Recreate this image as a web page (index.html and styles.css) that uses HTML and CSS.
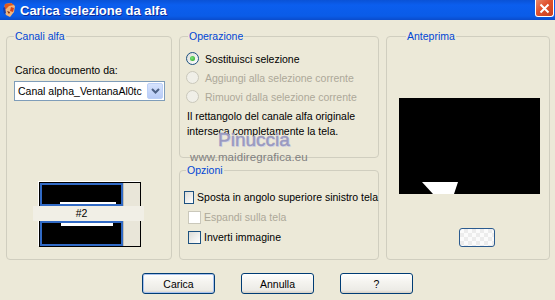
FILE: index.html
```html
<!DOCTYPE html>
<html lang="it">
<head>
    <meta charset="UTF-8">
    <title>Carica selezione da alfa</title>
    <link rel="stylesheet" href="styles.css">
</head>
<body>
    <div class="window">
        <div class="titlebar">
            <svg class="app-icon" width="15" height="16" viewBox="0 0 15 16">
                <path d="M3 2 L9 1 L13 4 L12 10 L8 15 L4 13 L2 8 Z" fill="#f2b57c"/>
                <path d="M3 2 L9 1 L12 3 L7 4 L4 7 L2 8 Z" fill="#e2581c"/>
                <path d="M9 5 L12 6 L11 10 L8 9 Z" fill="#d9431a"/>
                <path d="M1 6 L3 5 L4 11 L2 12 Z" fill="#1d3ea8"/>
                <path d="M5 9 L8 10 L7 12 Z" fill="#7a2a10"/>
            </svg>
            <span class="title">Carica selezione da alfa</span>
            <span class="close">
                <svg width="11" height="11" viewBox="0 0 11 11"><path d="M1.5 1.5 L9.5 9.5 M9.5 1.5 L1.5 9.5" stroke="#fff" stroke-width="2"/></svg>
            </span>
        </div>

        <div class="content">
            <div class="columns">
                <fieldset class="group group-alpha">
                    <legend>Canali alfa</legend>
                    <div class="field-label">Carica documento da:</div>
                    <div class="combo">
                        <span class="combo-text">Canal alpha_VentanaAl0tc</span>
                        <span class="combo-btn">
                            <svg width="9" height="6" viewBox="0 0 9 6"><path d="M1 1 L4.5 4.5 L8 1" fill="none" stroke="#4d6185" stroke-width="2"/></svg>
                        </span>
                    </div>
                    <div class="thumbs">
                        <div class="thumb thumb-top"></div>
                        <div class="thumb-side"></div>
                        <div class="thumb-label">#2</div>
                        <div class="thumb thumb-bottom"></div>
                        <div class="thumb-side"></div>
                    </div>
                </fieldset>

                <div class="col-mid">
                    <fieldset class="group group-op">
                        <legend>Operazione</legend>
                        <div class="option"><span class="radio checked"></span>Sostituisci selezione</div>
                        <div class="option disabled"><span class="radio"></span>Aggiungi alla selezione corrente</div>
                        <div class="option disabled"><span class="radio"></span>Rimuovi dalla selezione corrente</div>
                        <p class="note">Il rettangolo del canale alfa originale<br>interseca completamente la tela.</p>
                    </fieldset>
                    <fieldset class="group group-opt">
                        <legend>Opzioni</legend>
                        <div class="option"><span class="check"></span>Sposta in angolo superiore sinistro tela</div>
                        <div class="option sub disabled"><span class="check"></span>Espandi sulla tela</div>
                        <div class="option sub"><span class="check"></span>Inverti immagine</div>
                    </fieldset>
                </div>

                <fieldset class="group group-preview">
                    <legend>Anteprima</legend>
                    <div class="preview">
                        <svg width="141" height="96" viewBox="0 0 141 96">
                            <polygon points="23,84 59,84 55,96 34,96" fill="#fff"/>
                        </svg>
                    </div>
                    <button class="mini-btn"></button>
                </fieldset>
            </div>

            <div class="buttons">
                <button class="btn default">Carica</button>
                <button class="btn">Annulla</button>
                <button class="btn">?</button>
            </div>
        </div>

        <div class="watermark">
            <span class="wm-name">Pinuccia</span>
            <span class="wm-site">www.maidiregrafica.eu</span>
        </div>
    </div>
</body>
</html>
```

FILE: styles.css
```css
body {
    margin: 0;
    background: #ece9d8;
    font-family: "Liberation Sans", Arial, sans-serif;
    font-size: 10.5px;
    color: #000;
    overflow: hidden;
}
.window {
    position: relative;
    width: 555px;
    height: 300px;
    background: #ece9d8;
}
.titlebar {
    display: flex;
    align-items: center;
    height: 20px;
    background: linear-gradient(#0a52d6 0%, #0b5eee 25%, #0a5ce8 80%, #0a4ccc 100%);
}
.app-icon {
    margin-left: 2px;
}
.title {
    margin-left: 3px;
    color: #fff;
    font-weight: bold;
    font-size: 13px;
    text-shadow: 1px 1px 0 #0a2a9a;
}
.close {
    display: flex;
    align-items: center;
    justify-content: center;
    align-self: flex-start;
    margin-left: auto;
    margin-right: 1px;
    width: 17px;
    height: 16px;
    border: 1px solid #fff;
    border-top: none;
    border-radius: 0 0 3px 3px;
    background: linear-gradient(135deg, #e9886a, #e0502c 45%, #c8401f);
}

.content {
    padding: 10px 0 0 6px;
}
.columns {
    display: grid;
    grid-template-columns: 166px 200px 164px;
    column-gap: 7px;
    height: 230px;
}
.group {
    margin: 0;
    padding: 0;
    border: 1px solid #d0cebf;
    border-radius: 4px;
    min-width: 0;
}
.group legend {
    margin-left: 7px;
    padding: 0 1px;
    line-height: 13px;
    color: #0046d5;
}

.field-label {
    margin: 21px 0 0 8px;
    line-height: 13px;
}
.combo {
    display: flex;
    align-items: center;
    margin: 4px 0 0 7px;
    width: 151px;
    height: 20px;
    box-sizing: border-box;
    border: 1px solid #7f9db9;
    background: #fff;
}
.combo-text {
    flex: 1;
    overflow: hidden;
    white-space: nowrap;
    padding-left: 3px;
}
.combo-btn {
    display: flex;
    align-items: center;
    justify-content: center;
    width: 16px;
    height: 16px;
    margin: 0 1px;
    border: 1px solid #bcd0f7;
    border-radius: 2px;
    box-sizing: border-box;
    background: linear-gradient(#d6e3fd, #b8cbf6);
}

.thumbs {
    display: grid;
    grid-template-columns: 83px 17px;
    grid-template-rows: 23px 15px 25px;
    width: 100px;
    margin: 81px 0 0 32px;
    border: 1px solid #000;
    box-shadow: -1px -1px 0 #fff;
}
.thumb {
    box-sizing: border-box;
    border: 2px solid #316ac5;
    background-color: #000;
}
.thumb-top {
    background: linear-gradient(#fff, #fff) no-repeat 18px 100% / 56px 2px, #000;
}
.thumb-bottom {
    background: linear-gradient(#fff, #fff) no-repeat 19px 0 / 52px 3px, #000;
}
.thumb-side {
    border-left: 1px solid #c4c1b4;
    background: #e9e6d9;
}
.thumb-label {
    grid-column: 1 / -1;
    margin: 0 -4px 0 -7px;
    padding-right: 14px;
    background: #f1efe6;
    text-align: center;
    line-height: 15px;
}

.col-mid {
    display: flex;
    flex-direction: column;
    gap: 6px;
}
.group-op {
    height: 128px;
    box-sizing: border-box;
    padding-left: 6px;
}
.group-op legend,
.group-opt legend {
    margin-left: 2px;
}
.group-op .option:first-of-type {
    margin-top: 6px;
}
.group-opt {
    flex: 1;
    padding-left: 4px;
}
.group-opt .option {
    height: 20px;
    gap: 3px;
}
.group-opt .option:first-of-type {
    margin-top: 10px;
}
.option {
    display: flex;
    align-items: center;
    gap: 6px;
    height: 19px;
    white-space: nowrap;
}
.option.sub {
    margin-left: 4px;
}
.option.disabled {
    color: #aca899;
}
.radio {
    position: relative;
    width: 13px;
    height: 13px;
    box-sizing: border-box;
    border: 1px solid #1c5180;
    border-radius: 50%;
    background: linear-gradient(135deg, #dcdcd7, #fff);
}
.radio.checked::after {
    content: "";
    position: absolute;
    left: 3px;
    top: 3px;
    width: 5px;
    height: 5px;
    border-radius: 50%;
    background: radial-gradient(circle at 40% 40%, #7ee57a, #21a121);
}
.disabled .radio {
    border-color: #cac8bb;
    background: #f0efe8;
}
.check {
    width: 13px;
    height: 13px;
    box-sizing: border-box;
    border: 1px solid #1c5180;
    background: linear-gradient(135deg, #dcdcd7, #fff);
}
.disabled .check {
    border-color: #cac8bb;
    background: #fff;
}
.note {
    margin: 3px 0 0 1px;
    line-height: 15px;
}

.group-preview {
    padding-left: 12px;
}
.preview {
    margin-top: 55px;
    width: 141px;
    height: 96px;
    background: #000;
}
.preview svg {
    display: block;
}
.mini-btn {
    display: block;
    margin: 34px 0 0 60px;
    width: 36px;
    height: 19px;
    padding: 0;
    border: 1px solid #2b5b8f;
    border-radius: 3px;
    background: repeating-conic-gradient(#ececec 0 25%, #fbfbfb 0 50%) 0 0 / 8px 8px;
}

.buttons {
    display: flex;
    justify-content: center;
    gap: 26px;
    margin: 13px 0 0 -6px;
}
.btn {
    width: 73px;
    height: 21px;
    padding: 0;
    border: 1px solid #003c74;
    border-radius: 3px;
    background: linear-gradient(#fff, #f5f4f0 40%, #ecebe6 85%, #d6d0c5);
    font-family: inherit;
    font-size: 10.5px;
    color: #000;
}
.btn.default {
    box-shadow: inset 0 0 0 1px #a9c2ee;
}

.watermark {
    position: absolute;
    left: 187px;
    top: 130px;
    display: flex;
    flex-direction: column;
    pointer-events: none;
}
.wm-name {
    margin-left: 31px;
    font-size: 19px;
    line-height: 19px;
    color: #9a9ac0;
    -webkit-text-stroke: 0.5px #9a9ac0;
    text-shadow: 1px 1px 0 #d4d4e6;
}
.wm-site {
    margin: 1px 0 0 3px;
    font-size: 11.5px;
    line-height: 14px;
    letter-spacing: 0.1px;
    color: #808080;
}
```
